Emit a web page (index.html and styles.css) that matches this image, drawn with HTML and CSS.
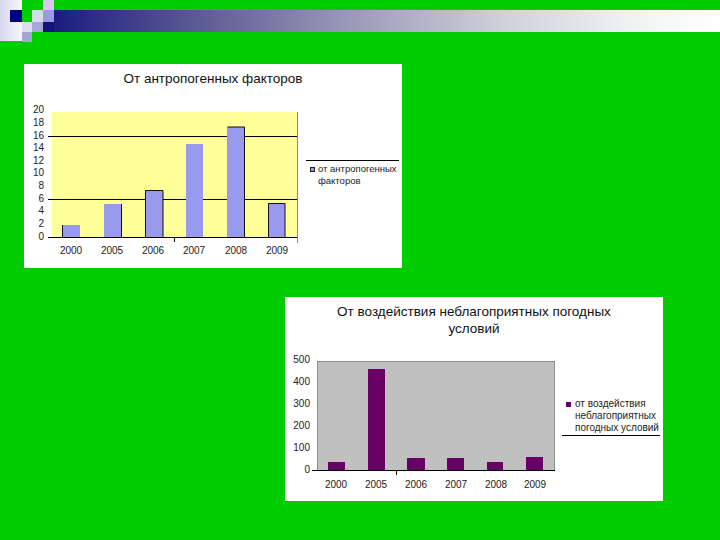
FILE: index.html
```html
<!DOCTYPE html>
<html lang="ru">
<head>
<meta charset="utf-8">
<title>Диаграммы</title>
<link rel="stylesheet" href="styles.css">
</head>
<body>
<div class="slide">
  <header class="mosaic">
    <div class="cell block"><div class="navy-square"></div></div>
    <div class="cell c-a"></div>
    <div class="cell c-b"></div>
    <div class="cell c-c"></div>
    <div class="cell c-d"></div>
    <div class="cell c-e"></div>
    <div class="cell c-f"></div>
    <div class="cell c-g"></div>
    <div class="cell band"></div>
  </header>
  <main>
    <figure class="chart chart-one">
      <svg viewBox="24 64 378 204" width="378" height="204">
        <text class="title" x="213" y="83">От антропогенных факторов</text>
        <rect class="plot-yellow" x="52" y="112" width="245" height="125"/>
        <path class="frame-right" d="M297.500 112V243"/>
        <path class="rule" d="M48 136.500H297M48 199.500H297M48 237.500H297"/>
        <path class="tick" d="M174.500 237V242"/>
        <g class="bar-blue">
          <rect x="62" y="225" width="18" height="12"/>
          <rect x="104" y="204" width="18" height="33"/>
          <rect x="145" y="190" width="18" height="47"/>
          <rect x="186" y="144" width="17" height="93"/>
          <rect x="227" y="127" width="18" height="110"/>
          <rect x="268" y="203" width="17" height="34"/>
        </g>
        <path class="bar-edge" d="M62.500 225V237M121.500 204V237M145.500 237V190.500H163V237M227.500 127H244.500V237M268.500 237V203.500H285V237"/>
        <g class="ylabels">
          <text x="44" y="113">20</text>
          <text x="44" y="126">18</text>
          <text x="44" y="139">16</text>
          <text x="44" y="151">14</text>
          <text x="44" y="164">12</text>
          <text x="44" y="176">10</text>
          <text x="44" y="189">8</text>
          <text x="44" y="202">6</text>
          <text x="44" y="214">4</text>
          <text x="44" y="227">2</text>
          <text x="44" y="240">0</text>
        </g>
        <g class="xlabels">
          <text x="71" y="254">2000</text>
          <text x="112" y="254">2005</text>
          <text x="153" y="254">2006</text>
          <text x="194" y="254">2007</text>
          <text x="236" y="254">2008</text>
          <text x="277" y="254">2009</text>
        </g>
        <path class="rule" d="M306 160.500H399"/>
        <rect class="swatch-blue" x="310.500" y="167.500" width="4" height="4"/>
        <text class="legend" x="318" y="172">от антропогенных</text>
        <text class="legend" x="318" y="184">факторов</text>
      </svg>
    </figure>
    <figure class="chart chart-two">
      <svg viewBox="285 297 378 204" width="378" height="204">
        <text class="title" x="474" y="316">От воздействия неблагоприятных погодных</text>
        <text class="title" x="474" y="333">условий</text>
        <rect class="plot-grey" x="317.500" y="361.500" width="237" height="109"/>
        <path class="rule" d="M312 470.500H555"/>
        <path class="tick" d="M396.500 470V475"/>
        <g class="bar-purple">
          <rect x="328" y="462" width="17" height="8"/>
          <rect x="368" y="369" width="17" height="101"/>
          <rect x="407" y="458" width="18" height="12"/>
          <rect x="447" y="458" width="17" height="12"/>
          <rect x="487" y="462" width="16" height="8"/>
          <rect x="526" y="457" width="17" height="13"/>
        </g>
        <g class="ylabels">
          <text x="310" y="363">500</text>
          <text x="310" y="385">400</text>
          <text x="310" y="407">300</text>
          <text x="310" y="429">200</text>
          <text x="310" y="451">100</text>
          <text x="310" y="473">0</text>
        </g>
        <g class="xlabels">
          <text x="336" y="488">2000</text>
          <text x="376" y="488">2005</text>
          <text x="416" y="488">2006</text>
          <text x="456" y="488">2007</text>
          <text x="496" y="488">2008</text>
          <text x="535" y="488">2009</text>
        </g>
        <rect class="swatch-purple" x="566" y="402" width="5" height="5"/>
        <text class="legend legend-wide" x="575" y="407">от воздействия</text>
        <text class="legend legend-wide" x="575" y="419">неблагоприятных</text>
        <text class="legend legend-wide" x="575" y="431">погодных условий</text>
        <path class="rule" d="M562 435.500H660"/>
      </svg>
    </figure>
  </main>
</div>
</body>
</html>
```

FILE: styles.css
```css
* {
  box-sizing: border-box;
}

html,
body {
  margin: 0;
  padding: 0;
}

.slide {
  width: 720px;
  height: 540px;
  overflow: hidden;
  background: #00cc00;
  font-family: "Liberation Sans", Arial, sans-serif;
}

.mosaic {
  display: grid;
  grid-template-columns: 22px 10px 11px 11px 1fr;
  grid-template-rows: 10px 12px 10px 10px;
  height: 42px;
}

.block {
  grid-column: 1;
  grid-row: 1 / 5;
  height: 41px;
  padding: 10px 0 0 10px;
  background: linear-gradient(90deg, #d4d4ec 0%, #e6e6f4 45%, #f6f6fb 100%);
}

.navy-square {
  width: 12px;
  height: 12px;
  background: #00007f;
}

.c-a {
  grid-column: 2;
  grid-row: 3;
  background: #dedef0;
}

.c-b {
  grid-column: 3;
  grid-row: 3;
  background: #a6a8d8;
}

.c-c {
  grid-column: 2;
  grid-row: 4;
  background: #a5a7d2;
}

.c-d {
  grid-column: 3;
  grid-row: 2;
  background: #d8d8ee;
}

.c-e {
  grid-column: 4;
  grid-row: 1;
  background: #d8c8f0;
}

.c-f {
  grid-column: 4;
  grid-row: 2;
  background: #9a9cdc;
}

.c-g {
  grid-column: 4;
  grid-row: 3;
  background: #14147c;
}

.band {
  grid-column: 5;
  grid-row: 2 / 4;
  background: linear-gradient(90deg, #1c1c80 0%, #5c5c94 22%, #9a9cb8 45%, #d0d2da 68%, #f2f4f4 88%, #ffffff 100%);
}

main {
  display: flex;
  flex-direction: column;
  padding-top: 22px;
}

.chart {
  width: 378px;
  height: 204px;
  margin: 0;
  background: #ffffff;
}

.chart svg {
  display: block;
}

.chart-one {
  margin-left: 24px;
}

.chart-two {
  margin-top: 29px;
  margin-left: 285px;
}

.title {
  font-size: 13.500px;
  fill: #111111;
  text-anchor: middle;
}

.plot-yellow {
  fill: #ffff99;
}

.plot-grey {
  fill: #c0c0c0;
  stroke: #8c8c8c;
  stroke-width: 1;
}

.rule,
.tick {
  fill: none;
  stroke: #000000;
  stroke-width: 1;
}

.frame-right {
  fill: none;
  stroke: #8c8c8c;
  stroke-width: 1;
}

.bar-blue rect {
  fill: #9999ee;
}

.bar-edge {
  fill: none;
  stroke: #111111;
  stroke-width: 1;
}

.bar-purple rect {
  fill: #660066;
}

.swatch-blue {
  fill: #9999ee;
  stroke: #222222;
  stroke-width: 1;
}

.swatch-purple {
  fill: #660066;
}

.ylabels text {
  font-size: 10px;
  fill: #222222;
  text-anchor: end;
}

.xlabels text {
  font-size: 10px;
  fill: #222222;
  text-anchor: middle;
}

.legend {
  font-size: 9.500px;
  fill: #222222;
}

.legend-wide {
  font-size: 10px;
}
```
